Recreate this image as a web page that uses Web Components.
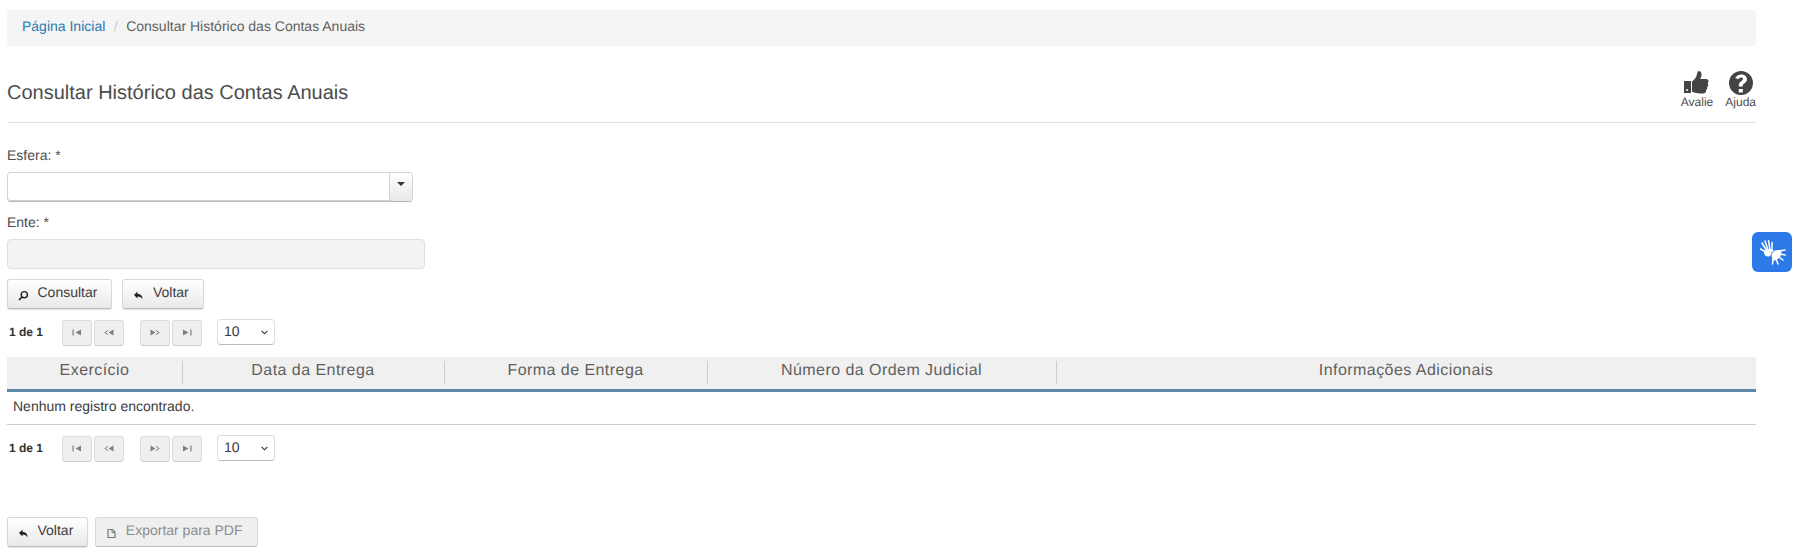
<!DOCTYPE html>
<html lang="pt-BR">
<head>
<meta charset="utf-8">
<title>Consultar Histórico das Contas Anuais</title>
<style>
  html, body { margin: 0; background: #fff; }
  body { font-family: "Liberation Sans", Arial, sans-serif; font-size: 14px; color: #333; height: 559px; overflow: hidden; text-rendering: geometricPrecision; }
  main { display: flex; flex-direction: column; width: 1749px; margin-left: 7px; padding-top: 10px; }
  .actions { display: flex; gap: 10px; }
  .actions.top { margin-top: 10px; }
  .actions.bottom { margin-top: 56px; gap: 7px; }
</style>
</head>
<body>
<main>
  <app-breadcrumb current="Consultar Histórico das Contas Anuais"></app-breadcrumb>
  <page-header title="Consultar Histórico das Contas Anuais"></page-header>
  <form-field label="Esfera: *" style="margin-top:24px"><combo-box></combo-box></form-field>
  <form-field label="Ente: *" style="margin-top:12px"><disabled-input></disabled-input></form-field>
  <div class="actions top">
    <ui-button icon="search">Consultar</ui-button>
    <ui-button icon="back">Voltar</ui-button>
  </div>
  <pager-bar style="margin-top:10px"></pager-bar>
  <data-table style="margin-top:12px"></data-table>
  <pager-bar style="margin-top:10px"></pager-bar>
  <div class="actions bottom">
    <ui-button icon="back">Voltar</ui-button>
    <ui-button icon="doc" disabled>Exportar para PDF</ui-button>
  </div>
</main>
<libras-widget></libras-widget>

<script>
class AppBreadcrumb extends HTMLElement {
  connectedCallback() {
    this.attachShadow({ mode: 'open' }).innerHTML = `
      <style>
        :host { display: flex; align-items: center; height: 36px; padding: 0 15px 4px; background: #f5f5f5; border-radius: 4px; box-sizing: border-box; font-size: 14px; }
        a { color: #2a7ab0; text-decoration: none; }
        .sep { color: #ccc; padding: 0 8.500px; }
        .cur { color: #5f5f5f; }
      </style>
      <a href="#">Página Inicial</a><span class="sep">/</span><span class="cur">${this.getAttribute('current')}</span>`;
  }
}
customElements.define('app-breadcrumb', AppBreadcrumb);

class PageHeader extends HTMLElement {
  connectedCallback() {
    this.attachShadow({ mode: 'open' }).innerHTML = `
      <style>
        :host { display: flex; justify-content: space-between; align-items: flex-end; height: 77px; box-sizing: border-box; border-bottom: 1px solid #e0e0e0; padding-bottom: 12px; }
        h1 { margin: 0; font-size: 20px; font-weight: 400; color: #4c4c4c; line-height: 24px; padding-bottom: 5px; }
        .tools { display: flex; gap: 12px; margin-bottom: 1px; }
        .tool { display: flex; flex-direction: column; align-items: center; font-size: 12px; color: #4c4c4c; line-height: 13px; }
        svg { display: block; width: 26px; height: 26px; margin-bottom: 0; fill: #444; }
        .thumb { margin-left: -2px; }
      </style>
      <h1>${this.getAttribute('title')}</h1>
      <div class="tools">
        <div class="tool">
          <svg class="thumb" viewBox="0 0 26 26"><path d="M1 11h7v12H1z"/><circle cx="4" cy="20" r="1" fill="#fff"/><path d="M9 11.500c2.500-1.800 4.500-4.600 5-7.500.3-1.600 1-3 2.200-3 1.800 0 2.600 2.200 2.300 4.500-.2 1.500-.8 2.700-1.300 3.500h6c1.400 0 2.300 1 2.300 2.200 0 .8-.4 1.500-1 2 .5.500.7 1.100.7 1.700 0 .9-.5 1.600-1.200 2 .2.400.3.800.3 1.200 0 1-.6 1.700-1.400 2.100.1.300.1.500.1.800 0 1.400-1.100 2.500-2.700 2.500h-3.300c-2.200 0-4.900-.8-8-1.700z"/></svg>
          Avalie
        </div>
        <div class="tool">
          <svg viewBox="0 0 26 26"><path fill-rule="evenodd" d="M13 1a12 12 0 1 0 0 24 12 12 0 0 0 0-24zM10.800 19h4v3.500h-4zM13.200 4.500c3.300 0 5.800 1.900 5.800 4.800 0 2-1.100 3-2.400 3.900-1 .7-1.800 1.300-1.800 2.300v.9h-4v-1.300c0-2 1.100-3 2.300-3.900.9-.6 1.800-1.200 1.800-2.300 0-.9-.7-1.400-1.800-1.400-1.200 0-2.100.7-2.900 1.800L7.200 7.900c1.300-2.100 3.200-3.400 6-3.400z"/></svg>
          Ajuda
        </div>
      </div>`;
  }
}
customElements.define('page-header', PageHeader);

class FormField extends HTMLElement {
  connectedCallback() {
    this.attachShadow({ mode: 'open' }).innerHTML = `
      <style>
        :host { display: block; }
        label { display: block; font-size: 14px; line-height: 16px; color: #4c4c4c; margin-bottom: 9px; }
      </style>
      <label>${this.getAttribute('label')}</label><slot></slot>`;
  }
}
customElements.define('form-field', FormField);

class ComboBox extends HTMLElement {
  connectedCallback() {
    this.attachShadow({ mode: 'open' }).innerHTML = `
      <style>
        :host { display: flex; width: 406px; height: 30px; box-sizing: border-box; border: 1px solid #d4d4d4; border-bottom-color: #b8b8b8; border-radius: 4px; background: #fff; box-shadow: inset 0 -1px 0 #d0d0d0; overflow: hidden; }
        .text { flex: 1; }
        .arrow { width: 23px; display: flex; align-items: flex-start; justify-content: center; padding-top: 9px; box-sizing: border-box; border-left: 1px solid #d4d4d4; border-radius: 0 0 0 4px; background: linear-gradient(#fff, #e8e8e8); }
        .arrow i { width: 0; height: 0; border: 4px solid transparent; border-top: 4px solid #333; border-bottom: 0; }
      </style>
      <div class="text"></div><div class="arrow"><i></i></div>`;
  }
}
customElements.define('combo-box', ComboBox);

class DisabledInput extends HTMLElement {
  connectedCallback() {
    this.attachShadow({ mode: 'open' }).innerHTML = `
      <style>
        :host { display: block; width: 418px; height: 30px; box-sizing: border-box; border: 1px solid #e0e0e0; border-radius: 4px; background: #f3f3f3; }
      </style>`;
  }
}
customElements.define('disabled-input', DisabledInput);

const BTN_ICONS = {
  search: '<circle cx="6.300" cy="4.700" r="3.100" fill="none" stroke="#222" stroke-width="1.400"/><path d="M4 7L1 10" fill="none" stroke="#222" stroke-width="1.700"/>',
  back: '<path d="M1 5l3.500-3.500V4c3 0 5 1.500 5 5.500C8.700 7.500 7 6.500 4.500 6.500v2z" fill="#222"/>',
  doc: '<path d="M2 1.500h4.500L9 4v5.500H2z" fill="none" stroke="#777" stroke-width="1.200"/><path d="M6 1.500V4.500h3" fill="none" stroke="#777" stroke-width="1"/>'
};

class UiButton extends HTMLElement {
  connectedCallback() {
    const disabled = this.hasAttribute('disabled');
    this.attachShadow({ mode: 'open' }).innerHTML = `
      <style>
        :host { display: inline-flex; align-items: center; height: 30px; box-sizing: border-box; padding: 0 14px 0 9.500px; border: 1px solid #d8d8d8; border-bottom-color: #bbb; border-radius: 3px; font-size: 14px; color: ${disabled ? '#8c8c8c' : '#3c3c3c'}; background: ${disabled ? '#efefef' : 'linear-gradient(#fff, #e9e9e9)'}; box-shadow: ${disabled ? 'none' : '0 1px 1px rgba(0,0,0,.12)'}; }
        svg { width: 11px; height: 11px; margin: 3px 9px 0 0; }
        span { position: relative; top: -2px; }
      </style>
      <svg viewBox="0 0 11 11">${BTN_ICONS[this.getAttribute('icon')]}</svg><span><slot></slot></span>`;
  }
}
customElements.define('ui-button', UiButton);

class PagerBar extends HTMLElement {
  connectedCallback() {
    const btn = d => `<button disabled><svg viewBox="0 0 10 7"><path d="${d}" fill="#808080"/></svg></button>`;
    this.attachShadow({ mode: 'open' }).innerHTML = `
      <style>
        :host { display: flex; align-items: center; height: 26px; font-family: "Liberation Sans", Arial, sans-serif; }
        b { font-size: 12px; color: #333; width: 53px; padding-left: 2px; box-sizing: border-box; margin-right: 2px; }
        .group { display: flex; gap: 2px; margin-right: 16px; }
        .group + .group { margin-right: 15px; }
        button { width: 30px; height: 26px; padding: 0; margin: 1px 0 0; border: 1px solid #ddd; border-bottom-color: #ccc; border-radius: 3px; background: #efefef; display: flex; align-items: center; justify-content: center; }
        svg { width: 10px; height: 7px; display: block; }
        .size { width: 58px; height: 26px; box-sizing: border-box; border: 1px solid #ddd; border-bottom-color: #bbb; border-radius: 4px; background: #fff; display: flex; align-items: center; justify-content: space-between; padding: 0 6px 2px 6px; font-size: 14px; color: #3c3c3c; }
        .size svg { width: 7px; height: 5px; margin-top: 3px; }
      </style>
      <b>1 de 1</b>
      <div class="group">
        ${btn('M.5 .5h1.200v6H.5zM9 .5v6L3.500 3.500z')}
        ${btn('M4 .8v.9L1.800 3.500 4 5.300v.9L.3 3.500zM9.500 .5v6L4.500 3.500z')}
      </div>
      <div class="group">
        ${btn('M.5 .5v6l5-3zM6 .8l3.700 2.700L6 6.200v-.9l2.200-1.800L6 1.700z')}
        ${btn('M1 .5v6l5.500-3zM8.300 .5h1.200v6H8.300z')}
      </div>
      <div class="size">10<svg viewBox="0 0 8 5"><path d="M.7.7L4 4l3.300-3.300" fill="none" stroke="#333" stroke-width="1.300"/></svg></div>`;
  }
}
customElements.define('pager-bar', PagerBar);

class DataTable extends HTMLElement {
  connectedCallback() {
    const cols = [['Exercício', 175], ['Data da Entrega', 262], ['Forma de Entrega', 263], ['Número da Ordem Judicial', 349], ['Informações Adicionais', 700]];
    this.attachShadow({ mode: 'open' }).innerHTML = `
      <style>
        :host { display: block; }
        .head { display: flex; height: 32px; background: #f0f0f0; border-bottom: 3px solid #5d88a3; }
        .th { box-sizing: border-box; position: relative; text-align: center; font-size: 16px; letter-spacing: .45px; color: #606060; line-height: 28px; }
        .th + .th::before { content: ""; position: absolute; left: 0; top: 4px; height: 23px; width: 1px; background: #ccc; }
        .row { height: 33px; box-sizing: border-box; border-bottom: 1px solid #ccc; padding-left: 6px; font-size: 14px; line-height: 28px; color: #3c3c3c; }
      </style>
      <div class="head">${cols.map(([t, w]) => `<div class="th" style="width:${w}px;flex:${w === 700 ? '1' : 'none'}">${t}</div>`).join('')}</div>
      <div class="row">Nenhum registro encontrado.</div>`;
  }
}
customElements.define('data-table', DataTable);

class LibrasWidget extends HTMLElement {
  connectedCallback() {
    this.attachShadow({ mode: 'open' }).innerHTML = `
      <style>
        :host { position: fixed; left: 1752px; top: 232px; width: 40px; height: 40px; border-radius: 6px; background: #2b7ae8; display: block; }
        svg { display: block; width: 40px; height: 40px; }
      </style>
      <svg viewBox="0 0 40 40" fill="none" stroke="#fff" stroke-linecap="round">
        <path d="M15 19L10 11M16 18L13 9M18 18L16.500 8.500M20 18L20 10.500M14 20L8.500 17" stroke-width="1.500"/>
        <path d="M12 19c2-2 8-3 10-1 .5 1-1 2-3 2.500 1 2-1 4-3 4-3 0-4.500-3-4-5.500z" fill="#fff" stroke="none"/>
        <path d="M20 20c3-2 7-3 9-1 1 2 0 5-2 7-2 2-4 3-6 2-1-2-2-5-1-8z" fill="#fff" stroke="none"/>
        <path d="M27 19L33 18M28 22L33 23M27 25L31 28M24 27L26 32M21 27L20.500 32" stroke-width="1.500"/>
        <path d="M21 17c1.500 1.500 1 3-1 4" stroke="#2b7ae8" stroke-width="1"/>
      </svg>`;
  }
}
customElements.define('libras-widget', LibrasWidget);
</script>
</body>
</html>
